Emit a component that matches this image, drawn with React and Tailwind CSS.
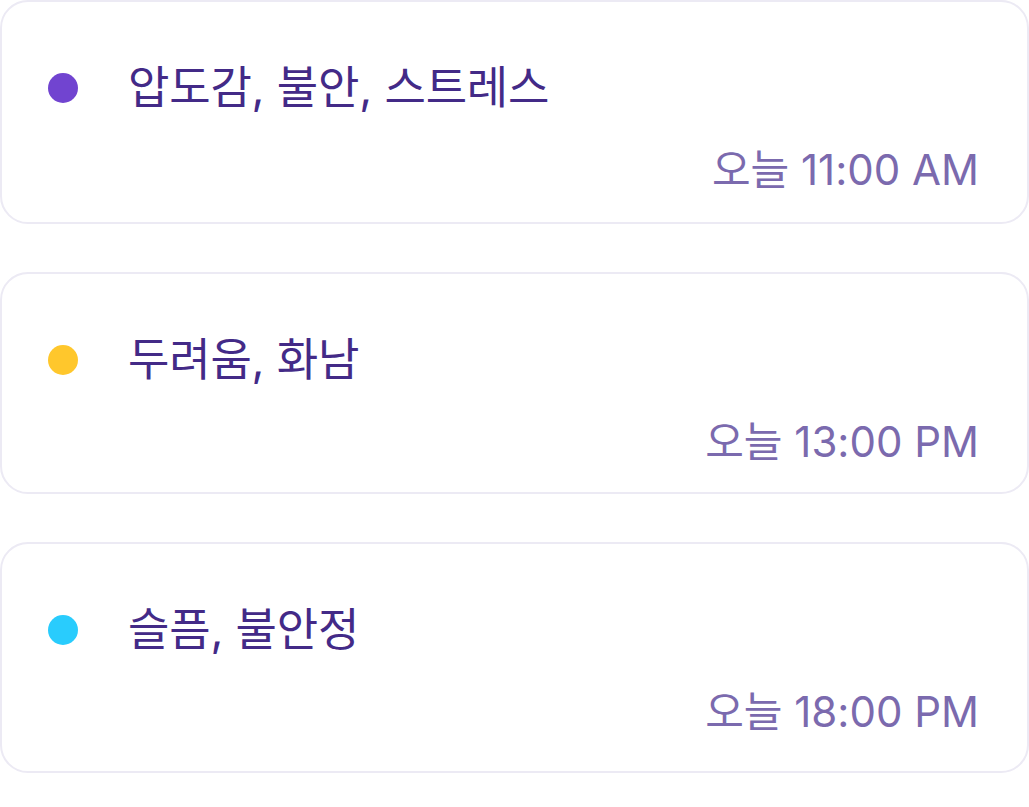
const items = [
  { title: "압도감, 불안, 스트레스", time: "오늘 11:00 AM", dot: "bg-[#7144D0]", pb: "pb-[28px]" },
  { title: "두려움, 화남", time: "오늘 13:00 PM", dot: "bg-[#FFC72C]", pb: "pb-[26px]" },
  { title: "슬픔, 불안정", time: "오늘 18:00 PM", dot: "bg-[#29CCFD]", pb: "pb-[35px]" },
];

export default function App() {
  return (
    <div
      className="w-[1029px] h-[807px] bg-white flex flex-col gap-12 overflow-hidden"
      style={{ fontFamily: '"Inter", "Noto Sans CJK KR", sans-serif' }}
    >
      {items.map((it) => (
        <div
          key={it.time}
          className={`border-2 border-[#ECEAF4] rounded-[28px] bg-white pl-[46px] pr-[48px] pt-[58px] ${it.pb}`}
        >
          <div className="flex items-center h-[56px]">
            <div className={`w-[30px] h-[30px] rounded-full ${it.dot} shrink-0`} />
            <div className="ml-[50px] text-[45px] leading-[56px] text-[#432A87] tracking-[-0.2px]">{it.title}</div>
          </div>
          <div className="mt-[30px] h-[48px] flex items-center justify-end text-[42px] leading-[48px] text-[#7B6AAE]">
            {it.time}
          </div>
        </div>
      ))}
    </div>
  );
}
